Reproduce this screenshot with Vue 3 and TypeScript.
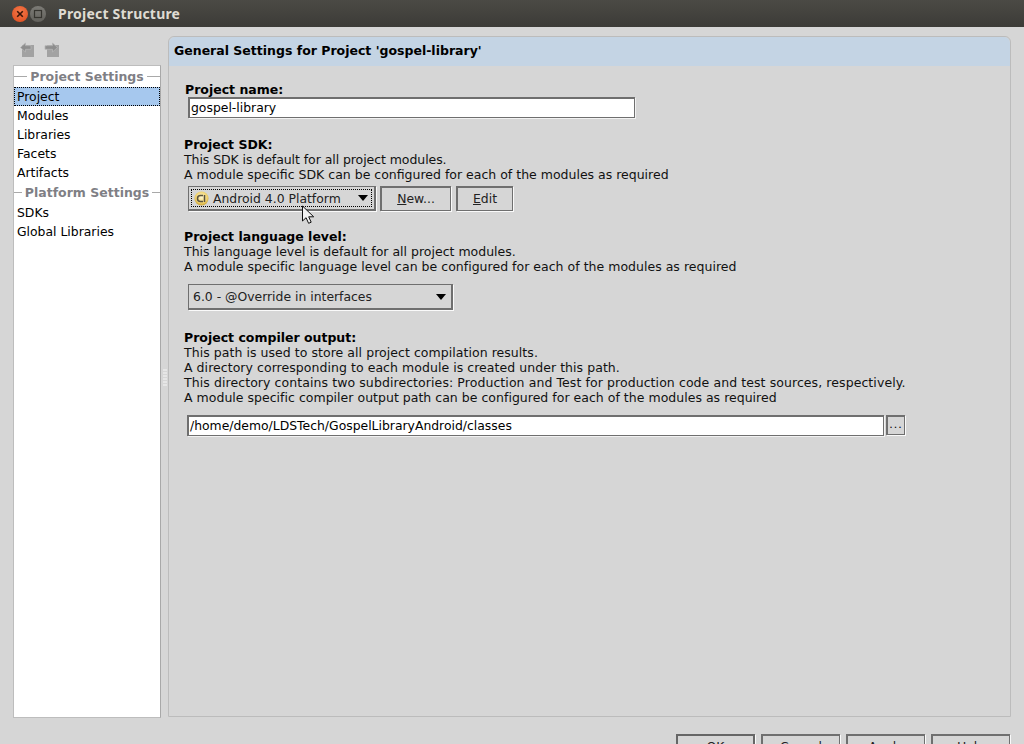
<script setup lang="ts">
const navItems1: string[] = ['Project', 'Modules', 'Libraries', 'Facets', 'Artifacts']
const navItems2: string[] = ['SDKs', 'Global Libraries']
const footer: string[] = ['OK', 'Cancel', 'Apply', 'Help']
</script>

<template>
  <div class="window">
    <header class="titlebar">
      <span class="wbtn close">
        <svg width="10" height="10" viewBox="0 0 10 10"><path d="M2.2 2.2l5.6 5.6M7.8 2.2l-5.6 5.6" stroke="#3a1408" stroke-width="1.6" fill="none" /></svg>
      </span>
      <span class="wbtn max">
        <svg width="10" height="10" viewBox="0 0 10 10"><rect x="1.5" y="1.5" width="7" height="7" stroke="#35342f" stroke-width="1.2" fill="none" /></svg>
      </span>
      <span class="title">Project Structure</span>
    </header>

    <div class="main">
      <aside class="side">
        <div class="tools">
          <svg width="16" height="16" viewBox="0 0 16 16">
            <rect x="2" y="3" width="12" height="12" fill="#a2a2a2" />
            <path d="M0.5 5.5L5.5 1v2.7H11v3.6H5.5V10z" fill="#8e8e8e" stroke="#b5b5b5" stroke-width="0.8" />
          </svg>
          <svg width="16" height="16" viewBox="0 0 16 16">
            <rect x="3" y="3" width="12" height="12" fill="#a2a2a2" />
            <path d="M13.5 5.5L8.5 1v2.7H1v3.6h7.5V10z" fill="#8e8e8e" stroke="#b5b5b5" stroke-width="0.8" />
          </svg>
        </div>
        <nav class="list">
          <div class="group">Project Settings</div>
          <div v-for="(n, i) in navItems1" :key="n" class="item" :class="{ sel: i === 0 }">{{ n }}</div>
          <div class="group">Platform Settings</div>
          <div v-for="n in navItems2" :key="n" class="item">{{ n }}</div>
        </nav>
      </aside>

      <div class="grip"><i v-for="k in 12" :key="k"></i></div>

      <section class="panel">
        <h1 class="phead">General Settings for Project 'gospel-library'</h1>
        <div class="pbody">
          <div class="b h-name">Project name:</div>
          <div class="field name-field">gospel-library</div>

          <div class="b h-sdk">Project SDK:</div>
          <div class="t tight">This SDK is default for all project modules.</div>
          <div class="t">A module specific SDK can be configured for each of the modules as required</div>
          <div class="row sdk-row">
            <div class="combo sdk">
              <span class="focus">
                <svg class="android" width="15" height="15" viewBox="0 0 15 15">
                  <defs>
                    <radialGradient id="andr" cx="50%" cy="40%" r="60%">
                      <stop offset="0%" stop-color="#fff6cf" />
                      <stop offset="70%" stop-color="#efd06a" />
                      <stop offset="100%" stop-color="#c99f32" />
                    </radialGradient>
                  </defs>
                  <circle cx="7.5" cy="7.5" r="7" fill="url(#andr)" />
                  <path d="M9 4.5H6.5a3 3 0 0 0 0 6H9" fill="none" stroke="#5a5340" stroke-width="1.5" />
                  <path d="M10.5 4v7" fill="none" stroke="#5a5340" stroke-width="1.5" />
                </svg>
                <span class="ctext">Android 4.0 Platform</span>
                <i class="tri"></i>
              </span>
            </div>
            <button class="btn new"><u>N</u>ew...</button>
            <button class="btn edit"><u>E</u>dit</button>
          </div>

          <div class="b h-lang">Project language level:</div>
          <div class="t">This language level is default for all project modules.</div>
          <div class="t loose-xs">A module specific language level can be configured for each of the modules as required</div>
          <div class="combo lang">
            <span class="ctext">6.0 - @Override in interfaces</span>
            <i class="tri"></i>
          </div>

          <div class="b h-out">Project compiler output:</div>
          <div class="t loose-s">This path is used to store all project compilation results.</div>
          <div class="t loose-s">A directory corresponding to each module is created under this path.</div>
          <div class="t loose-l">This directory contains two subdirectories: Production and Test for production code and test sources, respectively.</div>
          <div class="t loose-xs">A module specific compiler output path can be configured for each of the modules as required</div>
          <div class="row out-row">
            <div class="field out-field">/home/demo/LDSTech/GospelLibraryAndroid/classes</div>
            <button class="btn dots">...</button>
          </div>
        </div>
      </section>
    </div>

    <footer class="foot">
      <button v-for="(f, i) in footer" :key="f" class="btn fbtn" :class="{ def: i === 0 }">{{ f }}</button>
    </footer>

    <svg class="cursor" width="16" height="20" viewBox="0 0 16 20">
      <path d="M1.5 1v15l3.6-3.3 2.5 5.6 2.6-1.1-2.5-5.4h5z" fill="#f4f4f4" stroke="#111" stroke-width="1" stroke-linejoin="round" />
    </svg>
  </div>
</template>

<style>
html, body { margin: 0; padding: 0; overflow: hidden; }
</style>

<style scoped>
.window {
  position: relative;
  width: 1024px;
  height: 744px;
  overflow: hidden;
  background: #d6d6d6;
  font-family: "DejaVu Sans", sans-serif;
  font-size: 12px;
  color: #000;
  display: flex;
  flex-direction: column;
}
.titlebar {
  height: 27px;
  flex: none;
  background: linear-gradient(#4b4a45, #3c3b37);
  box-sizing: border-box;
  display: flex;
  align-items: center;
  padding-left: 12px;
}
.wbtn {
  width: 16px;
  height: 16px;
  border-radius: 50%;
  display: flex;
  align-items: center;
  justify-content: center;
  flex: none;
}
.close { background: radial-gradient(circle at 50% 35%, #f5794a, #dc4a1c); }
.max { background: linear-gradient(#7c7b76, #62615c); margin-left: 2px; }
.title {
  margin-left: 12px;
  font-family: "Noto Sans", sans-serif;
  font-weight: 700;
  font-size: 14px;
  letter-spacing: 0.2px;
  color: #dfdbd2;
}
.main {
  height: 691px;
  flex: none;
  display: flex;
  padding-left: 13px;
  box-sizing: border-box;
}
.side { width: 148px; flex: none; display: flex; flex-direction: column; }
.tools {
  height: 38px;
  flex: none;
  display: flex;
  align-items: flex-start;
  gap: 8px;
  padding: 15px 0 0 7px;
  box-sizing: border-box;
}
.list {
  width: 148px;
  height: 653px;
  box-sizing: border-box;
  background: #fff;
  border: 1px solid #bdbdbd;
  border-right-color: #a8a8a8;
}
.group {
  height: 21px;
  display: flex;
  align-items: center;
  gap: 3px;
  font-weight: 700;
  font-size: 12.5px;
  color: #7f7f85;
  white-space: nowrap;
}
.group::before, .group::after {
  content: "";
  height: 1px;
  background: #a9a9a9;
  flex: 1;
}
.item {
  height: 19px;
  line-height: 19px;
  padding-left: 3px;
  font-size: 12.4px;
  box-sizing: border-box;
}
.sel {
  background: #a6c8ee;
  outline: 1px dotted #000;
  outline-offset: -1px;
}
.grip {
  width: 7px;
  flex: none;
  display: grid;
  grid-template-columns: repeat(2, 2px);
  grid-auto-rows: 2px;
  gap: 1px 0;
  align-content: start;
  justify-content: center;
  padding-top: 342px;
  box-sizing: border-box;
}
.grip i { background: #e6e6e6; }
.panel {
  width: 843px;
  height: 681px;
  margin-top: 9px;
  flex: none;
  box-sizing: border-box;
  border: 1px solid #bcbcbc;
  border-radius: 6px 6px 0 0;
}
.phead {
  margin: 0;
  height: 29px;
  line-height: 28px;
  padding-left: 5px;
  font-size: 12.5px;
  font-weight: 700;
  background: #c4d4e4;
  border-radius: 6px 6px 0 0;
  box-sizing: border-box;
}
.pbody { padding-left: 15px; }
.b { font-weight: 700; font-size: 12.5px; line-height: 15px; }
.t { line-height: 15px; font-size: 12.5px; white-space: nowrap; color: #111; }
.tight { letter-spacing: -0.07px; }
.loose-s { letter-spacing: 0.05px; }
.loose-l { letter-spacing: 0.08px; }
.loose-xs { letter-spacing: 0.02px; }
.h-name { margin-top: 16px; padding-left: 1px; }
.field {
  box-sizing: border-box;
  background: #fff;
  border: 1px solid #6f6f6f;
  border-width: 2px 1px 1px 2px;
  box-shadow: 1px 1px 0 #f2f2f2;
  height: 21px;
  line-height: 18px;
  padding-left: 1px;
  font-size: 12.4px;
}
.name-field { width: 447px; margin: 0 0 0 4px; }
.h-sdk { margin-top: 19px; }
.row { display: flex; align-items: flex-start; }
.sdk-row { margin-top: 4px; margin-left: 4px; }
.combo {
  box-sizing: border-box;
  border: 1px solid #6f6f6f;
  border-width: 1px 2px 2px 1px;
  box-shadow: 1px 1px 0 #fafafa;
  background: #d6d6d6;
  font-size: 12.4px;
  position: relative;
}
.sdk { width: 188px; height: 25px; padding: 2px; }
.focus {
  display: flex;
  align-items: center;
  height: 100%;
  box-sizing: border-box;
  border: 1px dotted #000;
  padding-left: 2px;
}
.android { margin-right: 4px; flex: none; }
.ctext { white-space: nowrap; color: #222; }
.tri {
  display: block;
  width: 0;
  height: 0;
  border: 5px solid transparent;
  border-top: 6px solid #000;
  border-bottom: 0;
  margin-left: auto;
  margin-right: 3px;
}
.btn {
  box-sizing: border-box;
  background: #d6d6d6;
  border: 1px solid #6f6f6f;
  border-width: 2px 1px 1px 2px;
  box-shadow: 1px 1px 0 #fafafa;
  font-family: inherit;
  font-size: 12.4px;
  color: #222;
  padding: 0 0 2px;
  text-align: center;
}
.new { width: 71px; height: 25px; margin-left: 4px; }
.edit { width: 57px; height: 25px; margin-left: 5px; }
.h-lang { margin-top: 18px; }
.lang {
  width: 265px;
  height: 26px;
  margin: 10px 0 0 4px;
  display: flex;
  align-items: center;
  padding-left: 4px;
}
.lang .tri { margin-right: 5px; }
.h-out { margin-top: 20px; }
.out-row { margin-top: 10px; margin-left: 3px; }
.out-field { width: 697px; }
.dots { width: 19px; height: 20px; margin-left: 2px; line-height: 12px; font-size: 11px; letter-spacing: 1px; color: #000; }
.foot {
  display: flex;
  padding: 16px 0 0 676px;
  gap: 6px;
  flex: none;
}
.fbtn { width: 79px; height: 26px; flex: none; }
.def { border: 2px solid #666; }
.cursor { position: absolute; left: 301px; top: 205px; }
</style>
